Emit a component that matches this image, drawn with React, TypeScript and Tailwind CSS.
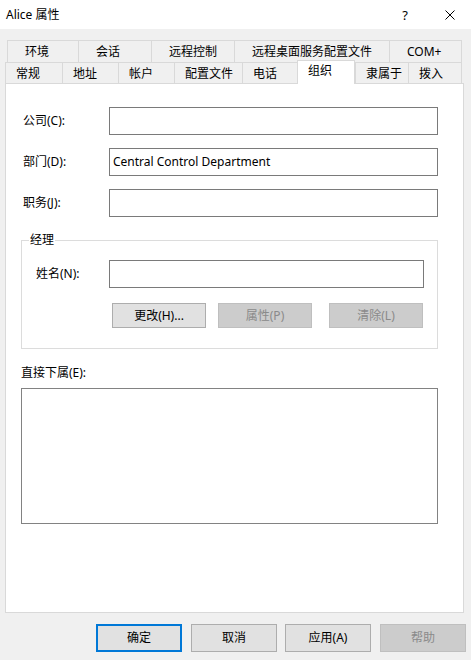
const rowOne = [
  { label: "环境", w: "w-[71px]" },
  { label: "会话", w: "w-[73px]" },
  { label: "远程控制", w: "w-[83px]" },
  { label: "远程桌面服务配置文件", w: "w-[155px]" },
  { label: "COM+", w: "w-[73px] border-r" },
];

const rowTwo = [
  { label: "常规", w: "w-[57px]" },
  { label: "地址", w: "w-[56px]" },
  { label: "帐户", w: "w-[56px]" },
  { label: "配置文件", w: "w-[68px]" },
  { label: "电话", w: "w-[55px]" },
  { label: "组织", w: "w-[58px]", active: true },
  { label: "隶属于", w: "w-[53px]" },
  { label: "拨入", w: "w-[54px] border-r" },
];

function Field({ label, value }: { label: string; value?: string }) {
  return (
    <div className="flex items-center">
      <span className="w-[88px] pl-[2px] leading-[16px]">{label}</span>
      <div className="flex h-[28px] flex-1 items-center border border-[#7a7a7a] bg-white pl-[3px] leading-[16px]">
        {value}
      </div>
    </div>
  );
}

function Btn({
  children,
  disabled,
  primary,
  className,
}: {
  children: React.ReactNode;
  disabled?: boolean;
  primary?: boolean;
  className?: string;
}) {
  const look = disabled
    ? "border border-[#bfbfbf] bg-[#cccccc] text-[#8a8a8a]"
    : primary
      ? "border-2 border-[#0078d7] bg-[#e1e1e1] text-black"
      : "border border-[#adadad] bg-[#e1e1e1] text-black";
  return (
    <div className={`flex items-center justify-center leading-[16px] ${look} ${className ?? ""}`}>
      {children}
    </div>
  );
}

export default function App() {
  return (
    <div className="h-[660px] w-[471px] overflow-hidden bg-[#f0f0f0] font-['Noto_Sans','Noto_Sans_CJK_SC',sans-serif] text-[12px] text-black">
      {/* title bar */}
      <div className="flex h-[29px] items-center bg-white pl-[6px]">
        <span className="leading-[16px]">Alice 属性</span>
        <span className="ml-auto text-[13px] leading-[16px]">?</span>
        <svg width="10" height="10" viewBox="0 0 10 10" className="ml-[37px] mr-[16px]">
          <path d="M0.5 0.5 L9.5 9.5 M9.5 0.5 L0.5 9.5" stroke="#000" strokeWidth="1" fill="none" />
        </svg>
      </div>

      {/* tabs */}
      <div className="pt-[11px]">
        <div className="ml-[7px] flex h-[22px]">
          {rowOne.map((t) => (
            <div
              key={t.label}
              className={`flex items-center border-l border-t border-[#d9d9d9] pl-[17px] leading-[16px] ${t.w}`}
            >
              {t.label}
            </div>
          ))}
        </div>
        <div className="ml-[5px] flex h-[21px] items-end">
          {rowTwo.map((t) =>
            t.active ? (
              <div
                key={t.label}
                className={`relative z-10 -mb-[1px] flex h-[24px] items-start border-l border-r border-t border-[#d9d9d9] bg-white pl-[10px] pt-[3px] leading-[14px] ${t.w}`}
              >
                {t.label}
              </div>
            ) : (
              <div
                key={t.label}
                className={`flex h-[21px] items-center border-l border-t border-[#d9d9d9] pl-[10px] pt-[2px] leading-[16px] ${t.w}`}
              >
                {t.label}
              </div>
            ),
          )}
        </div>
      </div>

      {/* panel */}
      <div className="ml-[5px] flex h-[530px] w-[459px] flex-col border border-[#d9d9d9] bg-white pl-[15px] pr-[25px] pt-[23px]">
        <div className="flex flex-col gap-[13px]">
          <Field label="公司(C):" />
          <Field label="部门(D):" value="Central Control Department" />
          <Field label="职务(J):" />
        </div>

        <fieldset className="mt-[16px] border border-[#dcdcdc] pb-[20px] pl-[14px] pr-[13px] pt-[13px]">
          <legend className="-ml-[7px] px-[1px] leading-[14px]">经理</legend>
          <div className="flex items-center">
            <span className="w-[73px] leading-[16px]">姓名(N):</span>
            <div className="h-[28px] flex-1 border border-[#7a7a7a] bg-white" />
          </div>
          <div className="ml-[76px] mt-[15px] flex">
            <Btn className="h-[25px] w-[94px]">更改(H)...</Btn>
            <Btn disabled className="ml-[12px] h-[25px] w-[94px]">属性(P)</Btn>
            <Btn disabled className="ml-[17px] h-[25px] w-[94px]">清除(L)</Btn>
          </div>
        </fieldset>

        <span className="mt-[16px] leading-[16px]">直接下属(E):</span>
        <div className="mt-[7px] h-[136px] border border-[#828282] bg-white" />
      </div>

      {/* dialog buttons */}
      <div className="mt-[11px] flex pl-[96px]">
        <Btn primary className="h-[28px] w-[86px]">确定</Btn>
        <Btn className="ml-[9px] h-[28px] w-[86px]">取消</Btn>
        <Btn className="ml-[8px] h-[28px] w-[86px]">应用(A)</Btn>
        <Btn disabled className="ml-[9px] h-[28px] w-[86px]">帮助</Btn>
      </div>
    </div>
  );
}
